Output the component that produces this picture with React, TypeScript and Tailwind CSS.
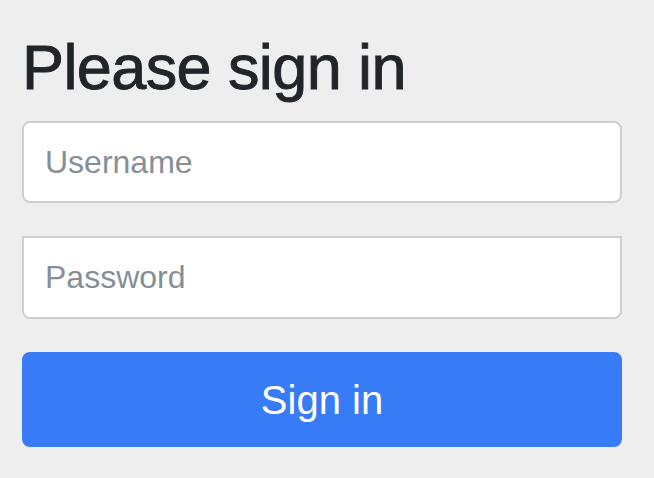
import React from 'react';

const App: React.FC = () => {
    return (
        <div className="min-h-screen w-full bg-[#eeeeee] font-['Liberation_Sans',Arial,sans-serif]">
            <form className="flex flex-col px-[22px] pt-[31px] w-[644px]" onSubmit={e => e.preventDefault()}>
                <h2 className="text-[63px] leading-[73px] font-normal text-[#212529] tracking-[-0.6px] [-webkit-text-stroke:0.9px_#212529] mb-[17px]">Please sign in</h2>
                <input
                    type="text"
                    placeholder="Username"
                    className="h-[82px] w-[600px] bg-white border-2 border-[#cfcfcf] rounded-[8px] px-[21px] text-[32px] text-[#212529] placeholder:text-[#868e96] outline-none"
                />
                <input
                    type="password"
                    placeholder="Password"
                    className="mt-[33px] h-[83px] w-[600px] bg-white border-2 border-[#cfcfcf] rounded-b-[8px] px-[21px] text-[32px] text-[#212529] placeholder:text-[#868e96] outline-none"
                />
                <button
                    type="submit"
                    className="mt-[33px] h-[95px] w-[600px] bg-[#377bf6] rounded-[8px] text-white text-[40px]"
                >
                    Sign in
                </button>
            </form>
        </div>
    );
};

export default App;
